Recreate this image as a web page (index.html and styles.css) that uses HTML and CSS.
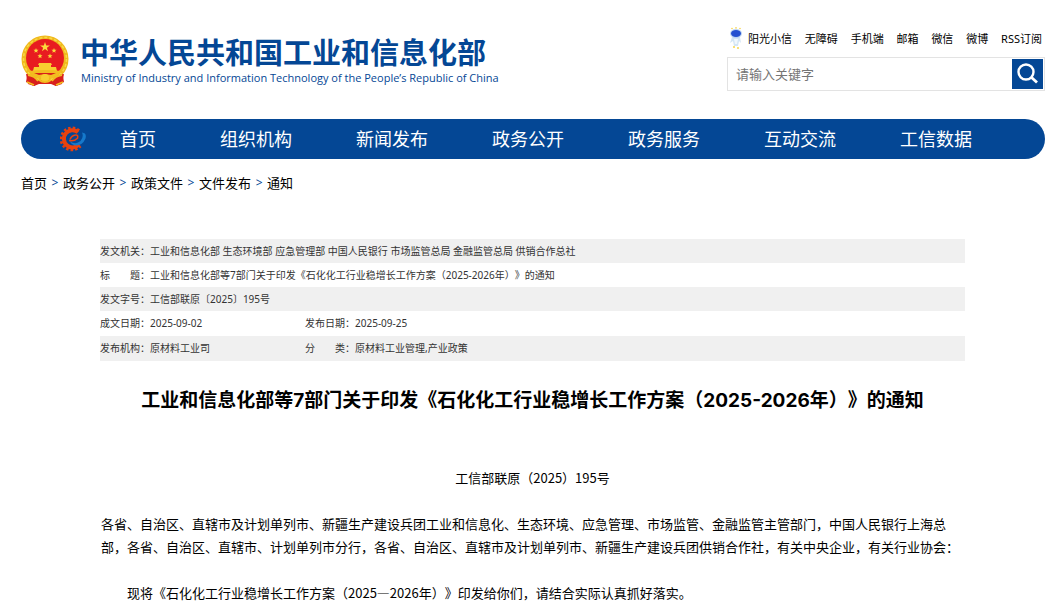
FILE: index.html
```html
<!DOCTYPE html>
<html lang="zh-CN">
<head>
<meta charset="utf-8">
<title>工业和信息化部等7部门关于印发《石化化工行业稳增长工作方案（2025-2026年）》的通知</title>
<link rel="stylesheet" href="styles.css">
</head>
<body>
<div class="page">
  <header class="header">
    <a class="brand" href="#">
      <svg class="emblem" viewBox="0 0 48 52" aria-hidden="true">
        <path d="M7 36 L5 47 L13 51 L16 49 H32 L35 51 L43 47 L41 36Z" fill="#d8201c"/>
        <circle cx="24" cy="24" r="23.5" fill="#f0b91c"/>
        <circle cx="24" cy="24" r="21.5" fill="none" stroke="#f8d84a" stroke-width="1.5" stroke-dasharray="3 2"/>
        <circle cx="24" cy="23" r="19" fill="#e81c20"/>
        <path d="M24 7l1.2 3.5h3.7l-3 2.2 1.1 3.5-3-2.1-3 2.1 1.1-3.5-3-2.2h3.7z" fill="#fbdc3c"/>
        <g fill="#fbdc3c">
          <path id="st" d="M15 13l.7 1.7 1.8.1-1.4 1.2.5 1.8-1.6-1-1.6 1 .5-1.8-1.4-1.2 1.8-.1z"/>
          <use href="#st" x="18"/>
          <use href="#st" x="4" y="5.500"/>
          <use href="#st" x="14" y="5.500"/>
        </g>
        <path d="M18 28h12l1 2h-1v2h5l1 4H12l1-4h5v-2h-1z" fill="#f8cf30"/>
        <path d="M8 36q16-2 32 0l-3 4-5 3H16l-5-3z" fill="#f3bd20"/>
        <path d="M13 38h22l-5 2-6-1-6 1z" fill="#d8201c"/>
        <path d="M5 39q8 1 12 6h14q4-5 12-6l-2 10-6 2-5-2H18l-5 2-6-2z" fill="#d8201c"/>
        <circle cx="24" cy="43" r="4" fill="#f8cf30"/>
        <path d="M7 40q7 1 10 6M41 40q-7 1-10 6M18 45q6 4 12 0M6 47l7 3M42 47l-7 3" fill="none" stroke="#f3bd20" stroke-width="1.800"/>
      </svg>
      <span class="brand-text">
        <span class="brand-cn">中华人民共和国工业和信息化部</span>
        <span class="brand-en" lang="en">Ministry of Industry and Information Technology of the People’s Republic of China</span>
      </span>
    </a>
    <div class="tools">
      <nav class="quick" aria-label="快捷入口">
        <a class="quick-bot" href="#">
          <svg class="bot" viewBox="0 0 14 22" aria-hidden="true">
            <path d="M3 10q4-2 8 0l1 6-2-2-1 5H5l-1-5-3 2z" fill="#d3e5f5"/>
            <path d="M5 12h4l-1 5H6z" fill="#f0f7fd"/>
            <ellipse cx="7" cy="6.500" rx="6" ry="4.500" fill="#bcd4f2"/>
            <ellipse cx="7" cy="6.500" rx="5" ry="3.400" fill="#2450d0"/>
            <g fill="#f6d44c"><circle cx="3" cy="1.500" r=".8"/><circle cx="7" cy=".9" r=".8"/><circle cx="11" cy="1.500" r=".8"/><circle cx="5" cy="20" r="1"/><circle cx="9" cy="21" r="1"/></g>
          </svg>阳光小信</a>
        <a href="#">无障碍</a>
        <a href="#">手机端</a>
        <a href="#">邮箱</a>
        <a href="#">微信</a>
        <a href="#">微博</a>
        <a href="#">RSS订阅</a>
      </nav>
      <form class="search">
        <input class="search-input" type="text" placeholder="请输入关键字" aria-label="请输入关键字">
        <button class="search-btn" type="button" aria-label="搜索">
          <svg viewBox="0 0 31 30" aria-hidden="true"><circle cx="14" cy="13" r="7.500" fill="none" stroke="#fff" stroke-width="2.400"/><path d="M19 18l6 5.500" stroke="#fff" stroke-width="2.800"/></svg>
        </button>
      </form>
    </div>
  </header>

  <nav class="mainnav" aria-label="主导航">
    <svg class="gear" viewBox="0 0 26 26" aria-hidden="true">
      <path d="M19.100 4.500A11 11 0 1 0 20.400 20.100" fill="none" stroke="#e8400f" stroke-width="2.800" stroke-dasharray="2.500 2"/>
      <path d="M18 6.200A8.600 8.600 0 1 0 19 18.500" fill="none" stroke="#ea420e" stroke-width="4"/>
      <path d="M9 14.500Q14.500 15.500 17.500 12.200 18.500 8.800 15.500 9 11.500 9.500 10 13.500" fill="none" stroke="#ea420e" stroke-width="1.600"/>
      <path d="M10 15.500q6 3.500 10.500-.5 3.500-4 1.500-8.500 5 .5 3.500 6-3 7-9.500 7-4.500-.500-6-4z" fill="#1679cb"/>
    </svg>
    <ul class="menu">
      <li><a href="#">首页</a></li>
      <li><a href="#">组织机构</a></li>
      <li><a href="#">新闻发布</a></li>
      <li><a href="#">政务公开</a></li>
      <li><a href="#">政务服务</a></li>
      <li><a href="#">互动交流</a></li>
      <li><a href="#">工信数据</a></li>
    </ul>
  </nav>

  <nav class="crumbs" aria-label="当前位置">
    <a href="#">首页</a><span>&gt;</span><a href="#">政务公开</a><span>&gt;</span><a href="#">政策文件</a><span>&gt;</span><a href="#">文件发布</a><span>&gt;</span><a href="#">通知</a>
  </nav>

  <main class="article">
    <table class="meta">
      <tr><th scope="row">发文机关：</th><td colspan="3">工业和信息化部 生态环境部 应急管理部 中国人民银行 市场监管总局 金融监管总局 供销合作总社</td></tr>
      <tr><th scope="row">标　　题：</th><td colspan="3">工业和信息化部等7部门关于印发《石化化工行业稳增长工作方案（2025-2026年）》的通知</td></tr>
      <tr><th scope="row">发文字号：</th><td colspan="3">工信部联原〔2025〕195号</td></tr>
      <tr class="dates"><th scope="row">成文日期：</th><td class="first">2025-09-02</td><th scope="row">发布日期：</th><td>2025-09-25</td></tr>
      <tr class="dates"><th scope="row">发布机构：</th><td class="first">原材料工业司</td><th scope="row">分　　类：</th><td>原材料工业管理,产业政策</td></tr>
    </table>
    <h1 class="title">工业和信息化部等7部门关于印发《石化化工行业稳增长工作方案（2025-2026年）》的通知</h1>
    <div class="content">
      <p class="docno">工信部联原（2025）195号</p>
      <p>各省、自治区、直辖市及计划单列市、新疆生产建设兵团工业和信息化、生态环境、应急管理、市场监管、金融监管主管部门，中国人民银行上海总部，各省、自治区、直辖市、计划单列市分行，各省、自治区、直辖市及计划单列市、新疆生产建设兵团供销合作社，有关中央企业，有关行业协会：</p>
      <p class="indent">现将《石化化工行业稳增长工作方案（2025—2026年）》印发给你们，请结合实际认真抓好落实。</p>
    </div>
  </main>
</div>
</body>
</html>
```
FILE: styles.css
```css
* {
  box-sizing: border-box;
}
body {
  margin: 0;
  background: #fff;
  color: #000;
  font-family: "Noto Sans", "Noto Sans CJK SC", sans-serif;
  text-spacing-trim: space-all;
}
a {
  color: inherit;
  text-decoration: none;
}
.page {
  margin: 0 5px 0 21px;
}
.header {
  display: flex;
  justify-content: space-between;
  align-items: flex-start;
  padding-top: 26px;
  height: 119px;
}
.brand {
  display: flex;
  gap: 10px;
  padding-top: 9px;
  color: #044795;
}
.emblem {
  width: 48px;
  height: 52px;
}
.brand-text {
  display: flex;
  flex-direction: column;
  padding-left: 1px;
  white-space: nowrap;
}
.brand-cn {
  font-size: 29px;
  line-height: 35px;
  font-weight: 700;
}
.brand-en {
  padding-left: 1px;
  font-family: "Open Sans", sans-serif;
  font-size: 11px;
  line-height: 15px;
}
.tools {
  width: 318px;
}
.quick {
  display: flex;
  justify-content: space-between;
  align-items: center;
  padding: 0 3px 0 2px;
  height: 23px;
  font-size: 11px;
  white-space: nowrap;
}
.quick-bot {
  display: flex;
  align-items: center;
  gap: 5px;
}
.bot {
  width: 14px;
  height: 22px;
}
.search {
  display: flex;
  align-items: center;
  margin-top: 8px;
  height: 34px;
  padding-right: 1px;
  border: 1px solid #e3e3e3;
}
.search-input {
  flex: 1;
  min-width: 0;
  height: 32px;
  padding: 0 8px;
  border: 0;
  background: #fff;
  font: inherit;
  font-size: 13px;
}
.search-input::placeholder {
  color: #757575;
}
.search-btn {
  width: 31px;
  height: 30px;
  padding: 0;
  border: 0;
  background: #044795;
}
.search-btn svg {
  display: block;
  width: 31px;
  height: 30px;
}
.mainnav {
  display: flex;
  align-items: center;
  height: 40px;
  padding-left: 39px;
  border-radius: 20px;
  background: #044795;
  color: #fff;
}
.gear {
  width: 26px;
  height: 26px;
}
.menu {
  display: flex;
  gap: 64px;
  margin: 0;
  padding: 0 0 0 34px;
  list-style: none;
  font-size: 18px;
  line-height: 40px;
  white-space: nowrap;
}
.crumbs {
  display: flex;
  padding-top: 14px;
  font-size: 13px;
  line-height: 20px;
}
.crumbs span {
  width: 16px;
  text-align: center;
  font-size: 12px;
  color: #044795;
}
.article {
  max-width: 866px;
  margin: 46px auto 0;
  padding-right: 1px;
}
.meta {
  width: 100%;
  border-collapse: collapse;
  font-size: 10px;
  line-height: 24px;
  color: #333;
}
.meta tr:nth-child(odd) {
  background: #f0f0f0;
}
.meta .dates {
  line-height: 25px;
}
.meta th,
.meta td {
  padding: 0;
  font-weight: 400;
  text-align: left;
  white-space: nowrap;
}
.meta th {
  width: 50px;
}
.meta .first {
  width: 155px;
}
.title {
  margin: 25px 0 0;
  font-family: Inter, "Noto Sans CJK SC", sans-serif;
  font-size: 19px;
  line-height: 30px;
  text-align: center;
}
.content {
  padding: 0 1px;
  font-family: "Noto Sans CJK SC", sans-serif;
  font-size: 13px;
  line-height: 23px;
}
.content p {
  margin: 0 0 23px;
}
.content .docno {
  margin-top: 50px;
  text-align: center;
}
.content .indent {
  text-indent: 2em;
}
```
